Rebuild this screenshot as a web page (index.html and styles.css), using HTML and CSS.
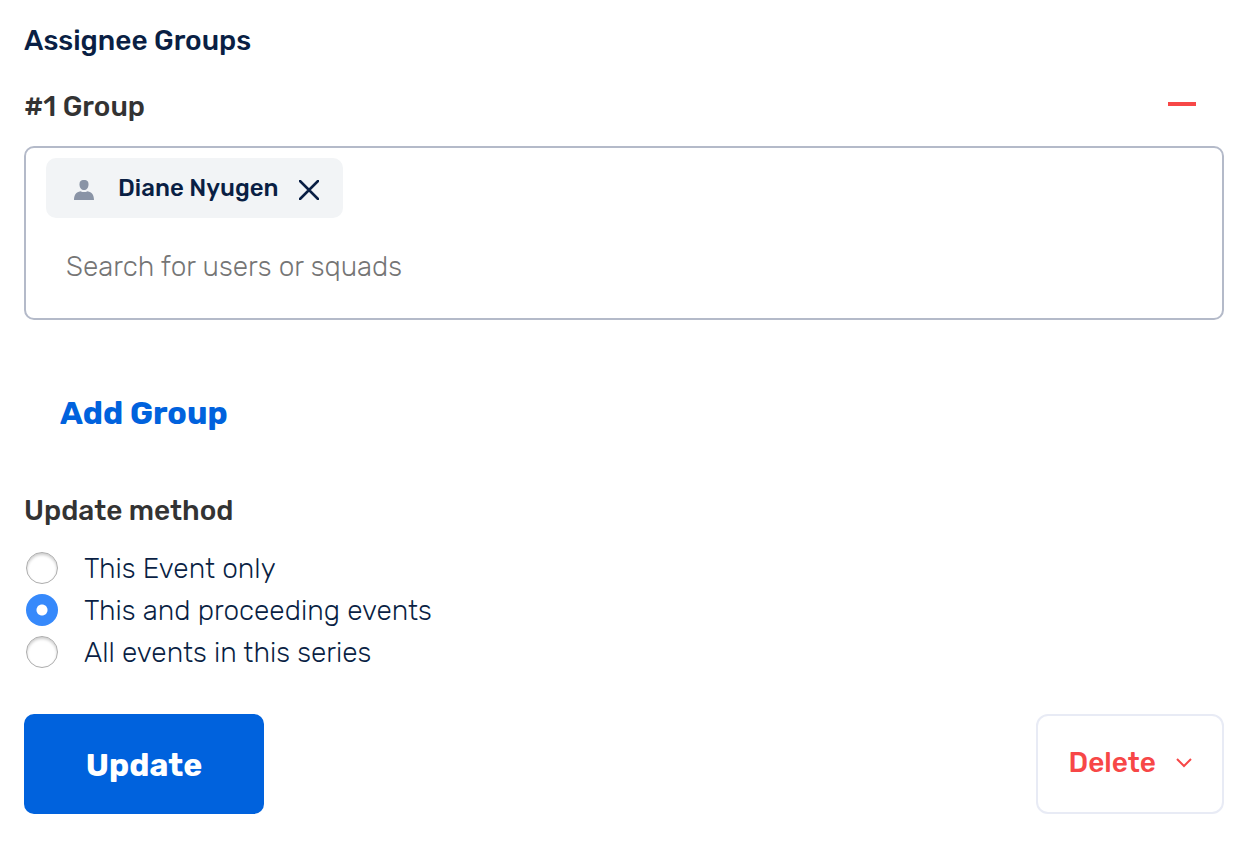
FILE: index.html
```html
<!DOCTYPE html>
<html lang="en">
<head>
    <meta charset="utf-8">
    <title>Edit Event</title>
    <meta name="viewport" content="width=device-width, initial-scale=1">
    <link rel="stylesheet" href="styles.css">
</head>
<body>
    <form class="event-form">
        <h2 class="section-title">Assignee Groups</h2>

        <div class="group-header">
            <label class="group-label" for="user-search">#1 Group</label>
            <button type="button" class="remove-group" aria-label="Remove group"></button>
        </div>

        <div class="user-picker">
            <div class="chip">
                <svg class="chip-icon" viewBox="0 0 20 20" aria-hidden="true">
                    <path d="M10 0C13.500 0 14.500 1.500 14.500 4.500C14.500 8 12.500 10 10 10C7.500 10 5.500 8 5.500 4.500C5.500 1.500 6.500 0 10 0Z"/>
                    <path d="M0 20C0 15 2 12 6.500 11.200Q10 13 13.500 11.200C18 12 20 15 20 20Z"/>
                </svg>
                <span class="chip-name">Diane Nyugen</span>
                <button type="button" class="chip-remove" aria-label="Remove Diane Nyugen">
                    <svg viewBox="0 0 20 20" aria-hidden="true"><path d="M1 1L19 19M19 1L1 19"/></svg>
                </button>
            </div>
            <input type="text" id="user-search" class="user-search" placeholder="Search for users or squads">
        </div>

        <button type="button" class="add-group">Add Group</button>

        <fieldset class="update-method">
            <legend>Update method</legend>
            <label class="option"><input type="radio" name="method" value="single">This Event only</label>
            <label class="option"><input type="radio" name="method" value="following" checked>This and proceeding events</label>
            <label class="option"><input type="radio" name="method" value="all">All events in this series</label>
        </fieldset>

        <div class="actions">
            <button type="submit" class="update-button">Update</button>
            <button type="button" class="delete-button">
                Delete
                <svg viewBox="0 0 16 10" aria-hidden="true"><path d="M1 1L8 8L15 1"/></svg>
            </button>
        </div>
    </form>
</body>
</html>
```
FILE: styles.css
```css
* {
    box-sizing: border-box;
}

body {
    margin: 0;
    background-color: #fff;
    color: #0a1f44;
    font-family: Rubik, Roboto, sans-serif;
    font-size: 28px;
    line-height: 42px;
}

button,
input {
    font: inherit;
}

button {
    padding: 0;
    border: none;
    background: none;
    cursor: pointer;
}

.event-form {
    padding: 20px 24px;
}

.section-title {
    margin: 0 0 24px;
    font-size: 28px;
    font-weight: 500;
}

.group-header {
    display: flex;
    justify-content: space-between;
    align-items: center;
    padding-right: 28px;
    margin-bottom: 18px;
    color: #333;
    font-weight: 500;
}

.remove-group {
    width: 28px;
    height: 4px;
    margin-bottom: 6px;
    background-color: #f74747;
}

.user-picker {
    padding: 10px 20px;
    border: 2px solid #b4bac9;
    border-radius: 10px;
}

.chip {
    display: inline-flex;
    align-items: center;
    height: 60px;
    padding: 0 24px 0 28px;
    border-radius: 10px;
    background-color: #f2f4f6;
    font-size: 24px;
    font-weight: 500;
}

.chip-icon {
    width: 20px;
    height: 20px;
    margin: 4px 24px 0 0;
    fill: #8a94a6;
}

.chip-remove {
    display: flex;
    margin: 4px 0 0 20px;
}

.chip-remove svg {
    width: 20px;
    height: 20px;
    stroke: #0a1f44;
    stroke-width: 2.5;
    stroke-linecap: round;
}

.user-search {
    display: block;
    width: 100%;
    height: 90px;
    padding: 6px 20px 0;
    border: none;
    outline: none;
    color: #0a1f44;
    font-weight: 300;
}

.user-search::placeholder {
    color: #757575;
}

.add-group {
    display: block;
    margin: 72px 36px 0;
    color: #0062dd;
    font-size: 32px;
    font-weight: 700;
}

.update-method {
    margin: 56px 0 40px;
    padding: 0;
    border: none;
    font-weight: 300;
}

.update-method legend {
    margin-bottom: 16px;
    padding: 0;
    color: #333;
    font-weight: 500;
}

.option {
    display: flex;
    align-items: center;
}

.option input {
    appearance: none;
    width: 32px;
    height: 32px;
    margin: 0 26px 2px 2px;
    border: 1px solid #adadad;
    border-radius: 50%;
    box-shadow: inset 0 2px 3px rgba(0, 0, 0, 0.2);
}

.option input:checked {
    border: none;
    background: radial-gradient(circle, #fff 5px, #3689fb 6px);
    box-shadow: none;
}

.actions {
    display: flex;
    justify-content: space-between;
}

.update-button {
    width: 240px;
    height: 100px;
    padding-top: 2px;
    border-radius: 10px;
    background-color: #0062dd;
    color: #fff;
    font-size: 32px;
    font-weight: 700;
}

.delete-button {
    display: flex;
    align-items: center;
    gap: 20px;
    height: 100px;
    padding: 0 30px 2px;
    border: 2px solid #e8ebf5;
    border-radius: 12px;
    color: #f74747;
    font-weight: 500;
}

.delete-button svg {
    width: 16px;
    height: 10px;
    fill: none;
    stroke: #f74747;
    stroke-width: 2;
}
```
